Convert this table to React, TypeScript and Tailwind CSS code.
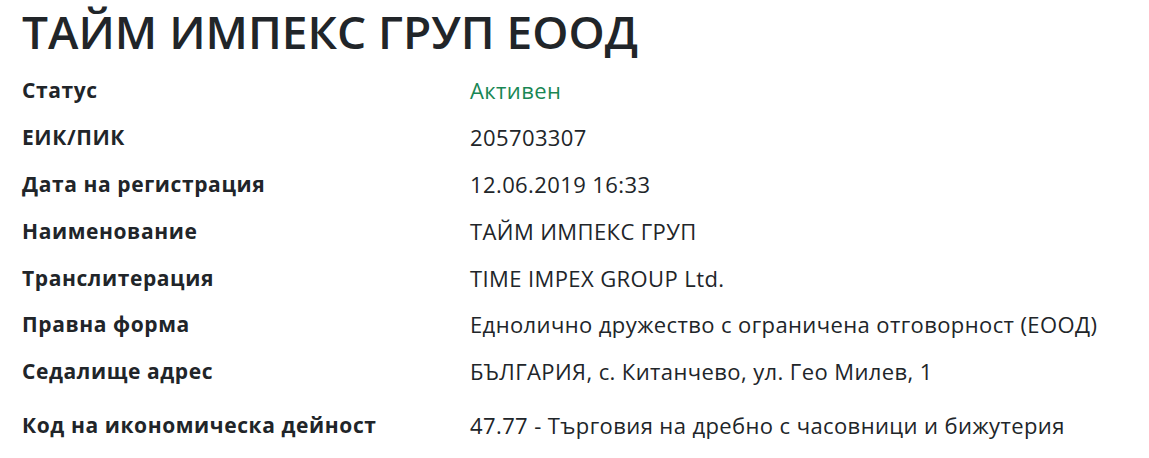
export default function App() {
  const rows = [
    { label: 'Статус', value: 'Активен', green: true },
    { label: 'ЕИК/ПИК', value: '205703307' },
    { label: 'Дата на регистрация', value: '12.06.2019 16:33' },
    { label: 'Наименование', value: 'ТАЙМ ИМПЕКС ГРУП' },
    { label: 'Транслитерация', value: 'TIME IMPEX GROUP Ltd.' },
    { label: 'Правна форма', value: 'Еднолично дружество с ограничена отговорност (ЕООД)' },
    { label: 'Седалище адрес', value: 'БЪЛГАРИЯ, с. Китанчево, ул. Гео Милев, 1' },
    { label: 'Код на икономическа дейност', value: '47.77 - Търговия на дребно с часовници и бижутерия' },
  ];
  return (
    <div className="min-h-[458px] bg-white pl-[22px] text-[#212529]" style={{ fontFamily: '"Open Sans", "Noto Sans", sans-serif' }}>
      <h1 className="pt-[1px] text-[46px] leading-[60px] font-semibold">ТАЙМ ИМПЕКС ГРУП ЕООД</h1>
      <div className="mt-[6px] flex flex-col">
        {rows.map((r, i) => (
          <div key={r.label} className={`flex h-[46.8px] items-center leading-[30px] ${i === rows.length - 1 ? 'mt-[7px]' : ''}`}>
            <div className="w-[448px] text-[21px] font-bold tracking-[0.6px]">{r.label}</div>
            <div className={`text-[22px] tracking-[0.4px] ${r.green ? 'text-[#198754]' : ''}`}>{r.value}</div>
          </div>
        ))}
      </div>
    </div>
  );
}
